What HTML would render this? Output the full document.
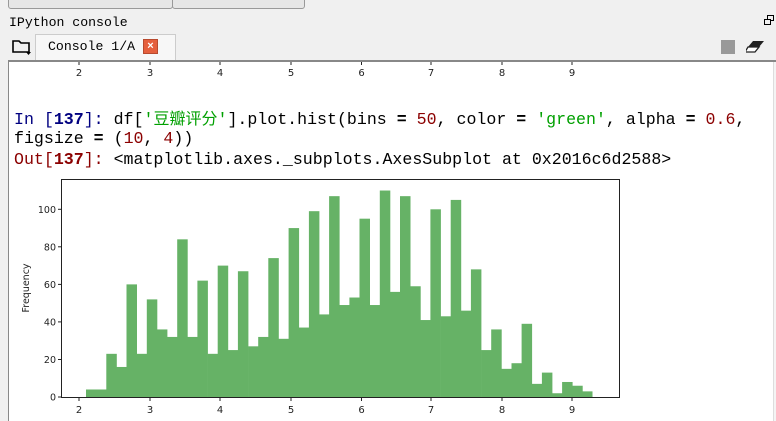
<!DOCTYPE html>
<html><head><meta charset="utf-8"><style>
body{margin:0;width:776px;height:421px;overflow:hidden;background:#f0f0f0;position:relative;font-family:"Liberation Mono","Noto Sans CJK SC",monospace}
.abs{position:absolute}
.code{position:absolute;left:14px;font-size:16.6px;line-height:21px;white-space:pre;color:#000}
.b{font-weight:bold}
.in{color:#000080}.out{color:#8b0000}.s{color:#00a000}.n{color:#8b0000}
.cjk{font-family:"Noto Sans CJK SC",sans-serif;font-size:16px}
</style></head><body>
<div class="abs" style="left:8px;top:-6px;width:163px;height:13px;border:1px solid #999;border-radius:3px;background:#e6e6e6"></div>
<div class="abs" style="left:172px;top:-6px;width:131px;height:13px;border:1px solid #999;border-radius:3px;background:#e6e6e6"></div>
<div class="abs" style="left:9px;top:15px;font-size:13.2px;color:#000">IPython console</div>
<div class="abs" style="left:767px;top:15px;width:5px;height:4px;border:1.5px solid #000"></div>
<div class="abs" style="left:764px;top:19px;width:5px;height:4px;border:1.5px solid #000;background:#f0f0f0"></div>
<svg class="abs" style="left:11px;top:38px" width="22" height="18"><path d="M2 3h6l2 2h8v9H2z" fill="none" stroke="#000" stroke-width="1.6"/><path d="M15 14h5l-2.5 3z" fill="#000"/></svg>
<div class="abs" style="left:35px;top:34px;width:139px;height:26px;background:#f7f7f7;border:1px solid #ccc;border-bottom:none"></div>
<div class="abs" style="left:48px;top:39px;font-size:13.2px">Console 1/A</div>
<div class="abs" style="left:143px;top:39px;width:13px;height:13px;background:#e5603e;border:1px solid #b84a2f;color:#fff;font:bold 11px/13px 'Liberation Sans';text-align:center">×</div>
<div class="abs" style="left:721px;top:40px;width:14px;height:14px;background:#999"></div>
<svg class="abs" style="left:746px;top:40px" width="20" height="14"><path d="M7 1h11l-5 6H2z" fill="#222"/><path d="M2 7h11l-4 5H-1z" fill="#fff" stroke="#222" stroke-width="1.3"/></svg>
<div class="abs" style="left:8px;top:60px;width:768px;height:2px;background:#888"></div>
<div class="abs" style="left:8px;top:62px;width:765px;height:359px;background:#fff;border-left:1px solid #888"></div>
<div class="abs" style="left:773px;top:62px;width:3px;height:359px;background:#f4f4f4;border-left:1px solid #ddd"></div>
<svg class="abs" style="left:0;top:0" width="776" height="421" font-family="'DejaVu Sans',sans-serif" font-size="10" fill="#222">
<g stroke="#222" stroke-width="1"><line x1="79" y1="62" x2="79" y2="65"/><line x1="150" y1="62" x2="150" y2="65"/><line x1="220" y1="62" x2="220" y2="65"/><line x1="291" y1="62" x2="291" y2="65"/><line x1="361.5" y1="62" x2="361.5" y2="65"/><line x1="431" y1="62" x2="431" y2="65"/><line x1="502" y1="62" x2="502" y2="65"/><line x1="572" y1="62" x2="572" y2="65"/></g>
<g text-anchor="middle"><text x="79" y="76">2</text><text x="150" y="76">3</text><text x="220" y="76">4</text><text x="291" y="76">5</text><text x="361.5" y="76">6</text><text x="431" y="76">7</text><text x="502" y="76">8</text><text x="572" y="76">9</text></g>
<g transform="translate(0,397) scale(1,-1.877)" fill="#66b266">
<rect x="86" width="20.6" height="4"/><rect x="106.3" width="10.5" height="23"/><rect x="116.4" width="10.5" height="16"/><rect x="126.5" width="10.5" height="60"/><rect x="136.7" width="10.5" height="23"/><rect x="146.8" width="10.5" height="52"/><rect x="156.9" width="10.5" height="36"/><rect x="167" width="10.5" height="32"/><rect x="177.2" width="10.5" height="84"/><rect x="187.3" width="10.5" height="32"/><rect x="197.4" width="10.5" height="62"/><rect x="207.6" width="10.5" height="23"/><rect x="217.7" width="10.5" height="70"/><rect x="227.8" width="10.5" height="25"/><rect x="237.9" width="10.5" height="67"/><rect x="248.1" width="10.5" height="27"/><rect x="258.2" width="10.5" height="32"/><rect x="268.3" width="10.5" height="74"/><rect x="278.5" width="10.5" height="31"/><rect x="288.6" width="10.5" height="90"/><rect x="298.7" width="10.5" height="37"/><rect x="308.9" width="10.5" height="99"/><rect x="319" width="10.5" height="44"/><rect x="329.1" width="10.5" height="107"/><rect x="339.3" width="10.5" height="49"/><rect x="349.4" width="10.5" height="53"/><rect x="359.5" width="10.5" height="95"/><rect x="369.6" width="10.5" height="49"/><rect x="379.8" width="10.5" height="110"/><rect x="389.9" width="10.5" height="56"/><rect x="400" width="10.5" height="107"/><rect x="410.2" width="10.5" height="59"/><rect x="420.3" width="10.5" height="41"/><rect x="430.4" width="10.5" height="100"/><rect x="440.6" width="10.5" height="43"/><rect x="450.7" width="10.5" height="105"/><rect x="460.8" width="10.5" height="46"/><rect x="470.9" width="10.5" height="68"/><rect x="481.1" width="10.5" height="25"/><rect x="491.2" width="10.5" height="36"/><rect x="501.3" width="10.5" height="15"/><rect x="511.5" width="10.5" height="18"/><rect x="521.6" width="10.5" height="39"/><rect x="531.7" width="10.5" height="7"/><rect x="541.9" width="10.5" height="13"/><rect x="552" width="10.5" height="2"/><rect x="562.1" width="10.5" height="8"/><rect x="572.2" width="10.5" height="6"/><rect x="582.4" width="10.1" height="3"/>
</g>
<rect x="61.5" y="179.5" width="558" height="218" fill="none" stroke="#222" stroke-width="1"/>
<g stroke="#222"><line x1="79" y1="398" x2="79" y2="401"/><line x1="150" y1="398" x2="150" y2="401"/><line x1="220" y1="398" x2="220" y2="401"/><line x1="291" y1="398" x2="291" y2="401"/><line x1="361.5" y1="398" x2="361.5" y2="401"/><line x1="431" y1="398" x2="431" y2="401"/><line x1="502" y1="398" x2="502" y2="401"/><line x1="572" y1="398" x2="572" y2="401"/>
<line x1="58" y1="397" x2="61" y2="397"/><line x1="58" y1="359.5" x2="61" y2="359.5"/><line x1="58" y1="321.9" x2="61" y2="321.9"/><line x1="58" y1="284.4" x2="61" y2="284.4"/><line x1="58" y1="246.8" x2="61" y2="246.8"/><line x1="58" y1="209.3" x2="61" y2="209.3"/></g>
<g text-anchor="middle"><text x="79" y="413">2</text><text x="150" y="413">3</text><text x="220" y="413">4</text><text x="291" y="413">5</text><text x="361.5" y="413">6</text><text x="431" y="413">7</text><text x="502" y="413">8</text><text x="572" y="413">9</text></g>
<g text-anchor="end" font-size="9.5"><text x="56" y="400.5">0</text><text x="56" y="363">20</text><text x="56" y="325.5">40</text><text x="56" y="288">60</text><text x="56" y="250.3">80</text><text x="56" y="212.8">100</text></g>
<text transform="translate(29,288) rotate(-90)" text-anchor="middle" font-size="9.5">Frequency</text>
</svg>
<div class="code" style="top:107px"><span class="in">In [<span class="b">137</span>]:</span> df[<span class="s">'<span class="cjk">豆瓣评分</span>'</span>].plot.hist(bins <span class="b">=</span> <span class="n">50</span>, color <span class="b">=</span> <span class="s">'green'</span>, alpha <span class="b">=</span> <span class="n">0.6</span>,</div>
<div class="code" style="top:128px">figsize <span class="b">=</span> (<span class="n">10</span>, <span class="n">4</span>))</div>
<div class="code" style="top:149px"><span class="out">Out[<span class="b">137</span>]:</span> &lt;matplotlib.axes._subplots.AxesSubplot at 0x2016c6d2588&gt;</div>
</body></html>
